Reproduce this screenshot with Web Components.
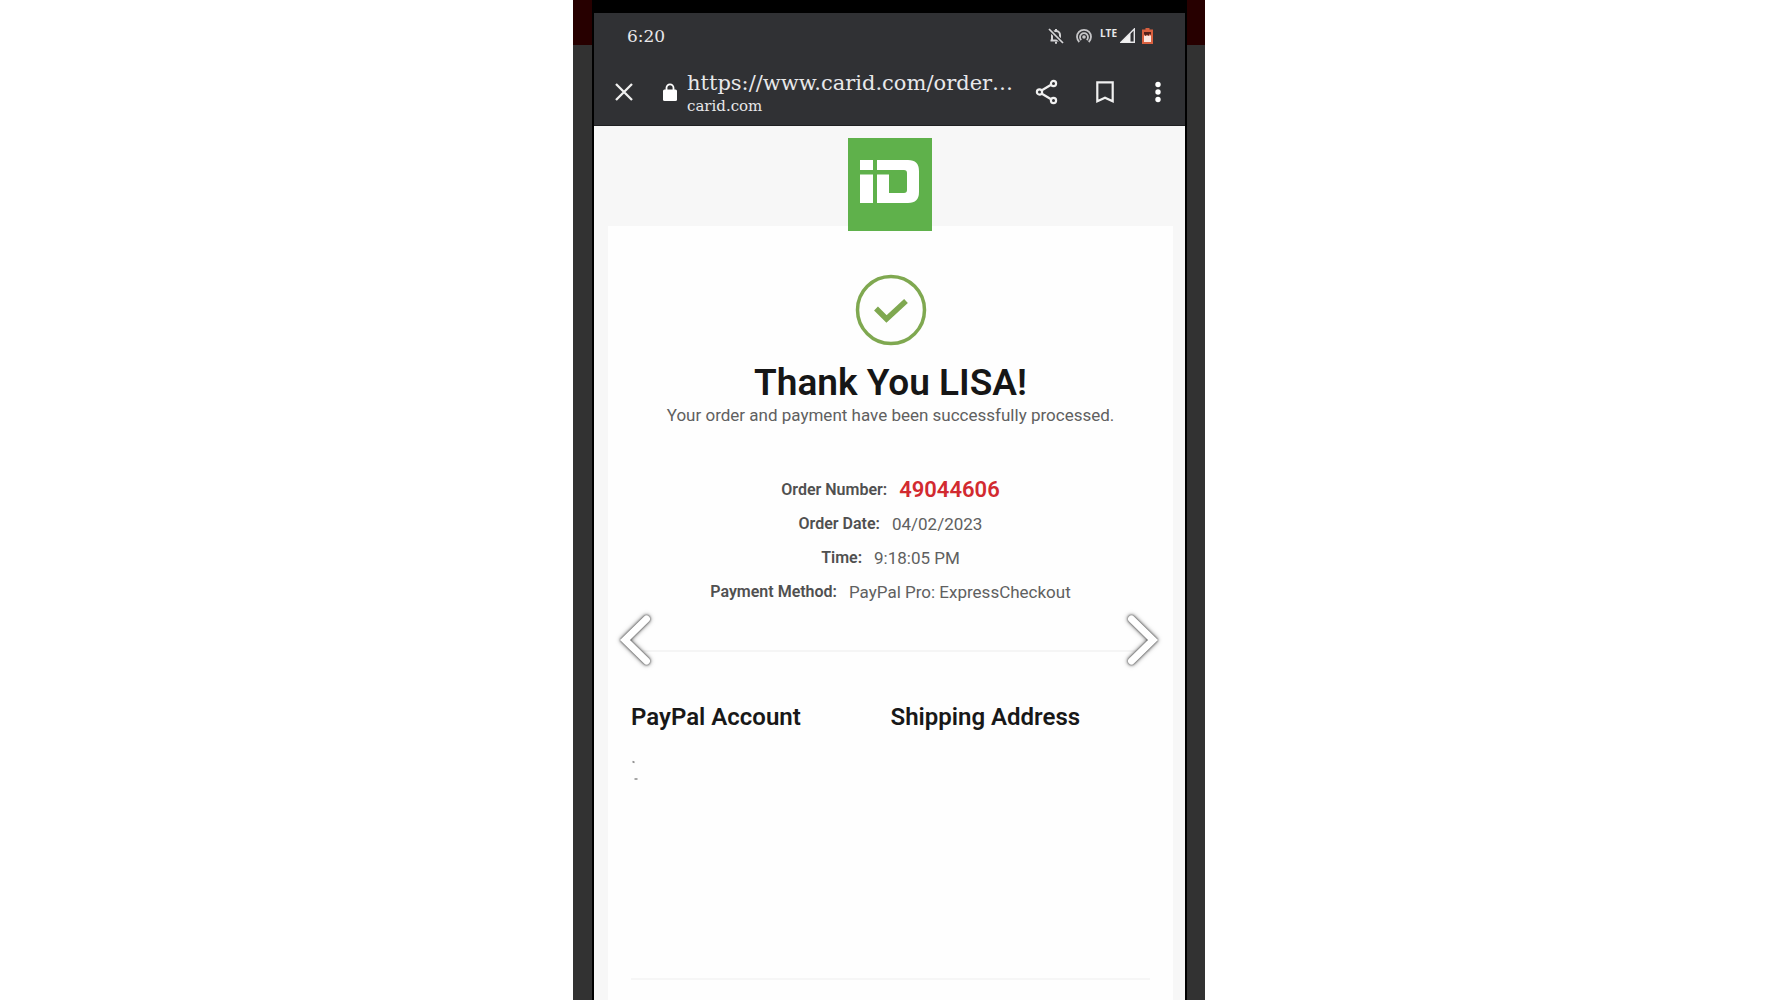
<!DOCTYPE html>
<html lang="en">
<head>
<meta charset="utf-8">
<meta name="viewport" content="width=device-width, initial-scale=1">
<title>Order confirmation</title>
<style>
body { margin: 0; background: #fff; font-family: Roboto, "Liberation Sans", sans-serif; }
</style>
</head>
<body>
<phone-frame>
  <status-bar slot="chrome" time="6:20"></status-bar>
  <browser-bar slot="chrome" url="https://www.carid.com/order…" host="carid.com"></browser-bar>
  <brand-header></brand-header>
  <order-card>
    <order-thanks>
      <span slot="title">Thank You LISA!</span>
      <span slot="note">Your order and payment have been successfully processed.</span>
    </order-thanks>
    <order-facts>
      <order-fact label="Order Number:" highlight>49044606</order-fact>
      <order-fact label="Order Date:">04/02/2023</order-fact>
      <order-fact label="Time:">9:18:05 PM</order-fact>
      <order-fact label="Payment Method:">PayPal Pro: ExpressCheckout</order-fact>
    </order-facts>
    <order-contacts>
      <span slot="account">PayPal Account</span>
      <span slot="address">Shipping Address</span>
    </order-contacts>
  </order-card>
  <slide-nav slot="nav"></slide-nav>
</phone-frame>
<script>
const define = (name, html, setup) => customElements.define(name, class extends HTMLElement {
  constructor() {
    super();
    this.attachShadow({ mode: "open" }).innerHTML = "<style>*{box-sizing:border-box;margin:0}:host{display:block;box-sizing:border-box}svg{display:block;flex:none}button{border:0;padding:0;background:none;color:inherit;font:inherit;display:block;flex:none}</style>" + html;
  }
  connectedCallback() { if (setup) setup(this, this.shadowRoot); }
});

define("phone-frame", `
<style>
:host { position: relative; max-width: 632px; min-height: 100vh; margin: 0 auto; display: flex;
  background: linear-gradient(#270000 45px, #323232 45px); padding: 0 18px 0 19px; }
.phone { flex: 1; min-width: 0; display: flex; flex-direction: column; background: #f7f7f7;
  border: solid #000; border-width: 13px 2px 0; }
.chrome { background: #303134; height: 113px; border-bottom: 1px solid #1f2022; color: #e8e8ea; }
main { flex: 1; display: flex; flex-direction: column; }
</style>
<div class="phone">
  <header class="chrome"><slot name="chrome"></slot></header>
  <main><slot></slot></main>
</div>
<slot name="nav"></slot>`);

define("status-bar", `
<style>
:host { font-family: "Roboto Slab", "DejaVu Serif", serif; }
.bar { display: flex; align-items: center; height: 46px; padding: 0 32px 0 33px; }
.time { flex: 1; font-size: 17px; line-height: 24px; }
.icons { display: flex; align-items: flex-start; height: 16px; }
.lte { font: 700 10px/10px "Open Sans", sans-serif; margin: 0 3px 0 8px; }
.hot { margin-left: 12px; }
.bat { margin-left: 6px; }
</style>
<div class="bar">
  <span class="time"></span>
  <div class="icons">
    <svg width="16" height="16" viewBox="0 0 16 16" fill="none" stroke="#d4d4d6" stroke-width="2"><path d="M4 12.500V7a4 4 0 0 1 8 0v5.500M2.500 12.500h11M8 1v2"/><path d="M7 14.800h2"/><path d="M1 1l14 14" stroke="#303134" stroke-width="4"/><path d="M1 1l14 14" stroke-width="1.700"/></svg>
    <svg class="hot" width="16" height="16" viewBox="0 0 16 16" fill="none" stroke="#c6c6c8" stroke-width="1.800"><path d="M3.300 14A7 7 0 1 1 12.700 14"/><path d="M5.300 12a4 4 0 1 1 5.400 0"/><circle cx="8" cy="9" r="1.800" fill="#c6c6c8" stroke="none"/></svg>
    <span class="lte">LTE</span>
    <svg width="16" height="16" viewBox="0 0 16 16"><path d="M1 14.300L14.300 1v13.300z" fill="none" stroke="#e6e6e8" stroke-width="1.400"/><path d="M1 14.500L10.500 5v9.500z" fill="#f1f1f1"/></svg>
    <svg class="bat" width="11" height="16" viewBox="0 0 11 16"><path d="M3.500 0h4v1.500H11V16H0V1.500h3.500z" fill="#d9603f"/><path d="M2 7.500h7V14H2z" fill="#fbe6df"/><path d="M2 4h7v3l-1.500-1.500L6.500 8 5 6.500 3.500 8 2 6z" fill="#54201a"/></svg>
  </div>
</div>`, (el, root) => { root.querySelector(".time").textContent = el.getAttribute("time"); });

define("browser-bar", `
<style>
:host { font-family: "Roboto Slab", "DejaVu Serif", serif; }
.bar { display: flex; align-items: center; height: 66px; padding: 0 20px 0 21px; }
.lock { margin-left: 30px; }
.page { flex: 1; min-width: 0; margin-left: 10px; padding-top: 2px; white-space: nowrap; }
.url { font-size: 21px; line-height: 26px; }
.host { font-size: 15px; line-height: 20px; }
.tools { display: flex; align-items: center; gap: 37px; }
</style>
<div class="bar">
  <button class="close" aria-label="Close"><svg width="18" height="18" viewBox="0 0 18 18" stroke="#f0f0f0" stroke-width="2.300"><path d="M1 1l16 16M17 1L1 17"/></svg></button>
  <svg class="lock" width="14" height="18" viewBox="0 0 14 18"><path d="M3.500 8V4.800a3.500 3.500 0 0 1 7 0V8" fill="none" stroke="#fff" stroke-width="1.800"/><rect y="6.500" width="14" height="11.500" rx="1.500" fill="#fff"/></svg>
  <div class="page"><p class="url"></p><p class="host"></p></div>
  <div class="tools">
    <button aria-label="Share"><svg width="24" height="26" viewBox="0 0 24 26" fill="none" stroke="#f0f0f0" stroke-width="2.200"><path d="M6.500 11.500l10-6M6.500 14.500l10 6"/><circle cx="4.500" cy="13" r="2.600"/><circle cx="18.500" cy="4.500" r="2.600"/><circle cx="18.500" cy="21.500" r="2.600"/></svg></button>
    <button aria-label="Bookmark"><svg width="18" height="22" viewBox="0 0 18 22" fill="none" stroke="#f0f0f0" stroke-width="2.200"><path d="M1.300 1.300h15.400v18.900L9 16.800l-7.700 3.400z"/></svg></button>
    <button aria-label="More options"><svg width="14" height="22" viewBox="0 0 14 22" fill="#fff"><circle cx="7" cy="3.500" r="2.700"/><circle cx="7" cy="11" r="2.700"/><circle cx="7" cy="18.500" r="2.700"/></svg></button>
  </div>
</div>`, (el, root) => {
  root.querySelector(".url").textContent = el.getAttribute("url");
  root.querySelector(".host").textContent = el.getAttribute("host");
});

define("brand-header", `
<style>
:host { position: relative; z-index: 1; height: 100px; padding-top: 12px; }
svg { margin: 0 auto; }
</style>
<svg width="84" height="93" viewBox="0 0 84 93" role="img" aria-label="iD"><path fill="#5fb14b" d="M0 0h84v93H0z"/><g fill="#fff"><path d="M12 22h13v10H12zM12 36.500h13V65H12z"/><path fill-rule="evenodd" d="M29 22h31q11 0 11 11v21q0 11-11 11H29V36.500h12V55h15q3 0 3-3V35q0-3-3-3H29z"/></g></svg>`);

define("order-card", `
<style>
:host { flex: 1; background: #fefefe; margin: 0 12px 0 14px; padding: 48px 23px 0; }
</style><slot></slot>`);

define("order-thanks", `
<style>
:host { text-align: center; }
svg { margin: 0 auto; }
h1 { font-size: 37px; line-height: 42px; font-weight: 600; color: #161616; margin-top: 16px; }
p { font-size: 17px; line-height: 22px; color: #606060; }
</style>
<svg width="72" height="72" viewBox="0 0 72 72" fill="none" stroke="#7fa850"><circle cx="36" cy="36" r="33.500" stroke-width="3.500"/><path d="M21 34.500l10.500 10.500L51 27" stroke-width="5.500"/></svg>
<h1><slot name="title"></slot></h1>
<p><slot name="note"></slot></p>`);

define("order-facts", `
<style>
:host { padding: 47px 0 41px; border-bottom: 2px solid #f5f5f5; }
</style><slot></slot>`);

define("order-fact", `
<style>
:host { display: flex; justify-content: center; align-items: center; gap: 12px; height: 34px; line-height: 34px; color: #606060; font-size: 17px; }
b { font-size: 16px; font-weight: 600; color: #505050; }
:host([highlight]) span { font-size: 22px; font-weight: 600; color: #d22a30; }
</style><b></b><span><slot></slot></span>`, (el, root) => { root.querySelector("b").textContent = el.getAttribute("label"); });

define("order-contacts", `
<style>
:host { display: grid; grid-template-columns: 1fr 1fr; min-height: 328px; padding-top: 50px; border-bottom: 2px solid #f6f6f6; }
h2 { font-size: 24px; line-height: 30px; font-weight: 600; color: #181818; }
svg { margin-top: 28px; }
</style>
<section><h2><slot name="account"></slot></h2>
<svg width="10" height="22" viewBox="0 0 10 22" stroke="#8a8a8a" stroke-width="1.500" aria-hidden="true"><path d="M1.500 1.500l2 1M3.500 19h3"/></svg></section>
<section><h2><slot name="address"></slot></h2></section>`);

define("slide-nav", `
<style>
:host { position: absolute; top: 610px; left: 39px; right: 39px; display: flex; justify-content: space-between; }
svg { filter: drop-shadow(0 0 1px #444) drop-shadow(0 0 2px #777); overflow: visible; }
path { fill: none; stroke: #fff; stroke-width: 7; stroke-linecap: round; stroke-linejoin: miter; }
</style>
<button aria-label="Previous"><svg width="44" height="60" viewBox="0 0 44 60"><path d="M34.500 9L13 30l21.500 21"/></svg></button>
<button aria-label="Next"><svg width="44" height="60" viewBox="0 0 44 60"><path d="M9.500 9L31 30 9.500 51"/></svg></button>`);
</script>
</body>
</html>
